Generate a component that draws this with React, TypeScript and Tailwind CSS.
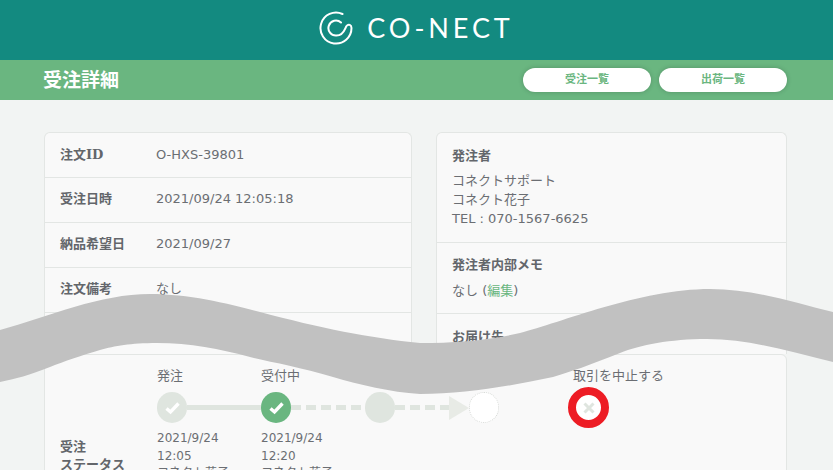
const font = { fontFamily: '"DejaVu Sans","Noto Sans CJK JP",sans-serif' };

function Row({ label, value, first }: { label: React.ReactNode; value: string; first?: boolean }) {
  return (
    <div className={`flex items-center h-[45px] px-[15px] border-b border-[#e3e6e4] ${first ? "" : "pb-[2px]"}`}>
      <div className="w-[96px] font-bold text-[#63666b]">{label}</div>
      <div className="text-[#6b6e73]">{value}</div>
    </div>
  );
}

function Check({ color }: { color: string }) {
  return (
    <div className="w-[30px] h-[31px] rounded-full flex items-center justify-center shrink-0" style={{ background: color }}>
      <svg width="17" height="14" viewBox="0 0 17 14"><path d="M2.5 7.5 6.5 11 14.5 2.5" fill="none" stroke="#fff" strokeWidth="3.4" /></svg>
    </div>
  );
}

const dash = "h-[5px] flex-1 bg-[repeating-linear-gradient(90deg,#dfe5df_0,#dfe5df_10px,transparent_10px,transparent_15px)]";

function Step({ label, date, time, who, children }: { label?: string; date?: string; time?: string; who?: string; children: React.ReactNode }) {
  return (
    <div className="w-[104px] flex flex-col shrink-0">
      <div className="h-[20px] leading-[20px] text-[#6b6e73] mb-[6px] whitespace-nowrap">{label || "\u00a0"}</div>
      <div className="flex items-center h-[31px]">{children}</div>
      <div className="mt-[7px] text-[12px] leading-[17.5px] text-[#6b6e73] whitespace-nowrap">
        <div>{date}</div>
        <div>{time}</div>
        <div>{who}</div>
      </div>
    </div>
  );
}

export default function App() {
  return (
    <div className="relative h-screen overflow-hidden bg-[#f2f4f3] text-[13px]" style={font}>
      <header className="h-[60px] bg-[#138a80] flex items-center justify-center gap-[14px] pb-[5px] pr-[3px] text-white">
        <svg width="34" height="34" viewBox="0 0 34 34" fill="none" stroke="#fff" strokeWidth="2" strokeLinecap="round">
          <path d="M23.5 3A15.5 15.5 0 1 0 32.5 17C32.5 14 29.5 12.5 27.5 15C26 17 25 24.5 17.5 24.5A7.5 7.5 0 1 1 22 11.5" />
        </svg>
        <div className="text-[27px] leading-none font-normal tracking-[3.9px] mr-[-3px]" style={{ fontFamily: "Lato, sans-serif" }}>CO-NECT</div>
      </header>
      <div className="h-[40px] bg-[#6ab680] flex items-center pl-[43px] pr-[46px] justify-between">
        <h1 className="text-[19px] font-bold text-white">受注詳細</h1>
        <div className="flex gap-2">
          <button className="w-[128px] h-[24px] rounded-full bg-white text-[11px] font-bold text-[#6ab680] shadow-[0_0_5px_rgba(0,0,0,0.2)]">受注一覧</button>
          <button className="w-[128px] h-[24px] rounded-full bg-white text-[11px] font-bold text-[#6ab680] shadow-[0_0_5px_rgba(0,0,0,0.2)]">出荷一覧</button>
        </div>
      </div>
      <main className="pt-[32px] pl-[44px] pr-[46px]">
        <div className="flex gap-[24px] h-[222px]">
          <div className="w-[368px] bg-[#f9f9f9] border border-b-0 border-[#e3e6e4] rounded-t-md">
            <Row first label={<>注文<span style={{ fontFamily: '"DejaVu Serif",serif' }}>ID</span></>} value="O-HXS-39801" />
            <Row label="受注日時" value="2021/09/24 12:05:18" />
            <Row label="納品希望日" value="2021/09/27" />
            <Row label="注文備考" value="なし" />
          </div>
          <div className="flex-1 bg-[#f9f9f9] border border-b-0 border-[#e3e6e4] rounded-t-md overflow-hidden text-[#6b6e73]">
            <div className="h-[110px] px-[15px] pt-[13px] border-b border-[#e3e6e4] leading-[19px]">
              <div className="font-bold text-[#63666b] mb-[6px]">発注者</div>
              <div>コネクトサポート</div>
              <div>コネクト花子</div>
              <div>TEL : 070-1567-6625</div>
            </div>
            <div className="h-[71px] px-[15px] pt-[12px] border-b border-[#e3e6e4] leading-[19px]">
              <div className="font-bold text-[#63666b] mb-[7px]">発注者内部メモ</div>
              <div>なし (<span className="text-[#6ab680]">編集</span>)</div>
            </div>
            <div className="px-[15px] pt-[13px] leading-[19px] font-bold text-[#63666b]">お届け先</div>
          </div>
        </div>
        <div className="flex bg-[#f9f9f9] border border-[#e3e6e4] rounded-t-md h-[140px] pl-[15px] pt-[11px]">
          <div className="w-[97px] pt-[72px] font-bold text-[#63666b] leading-[18px]">
            <div>受注</div>
            <div>ステータス</div>
          </div>
          <Step label="発注" date="2021/9/24" time="12:05" who="コネクト花子">
            <Check color="#dfe5df" />
            <div className="h-[5px] flex-1 bg-[#dfe5df]" />
          </Step>
          <Step label="受付中" date="2021/9/24" time="12:20" who="コネクト花子">
            <Check color="#6ab680" />
            <div className={dash} />
          </Step>
          <Step>
            <div className="w-[30px] h-[31px] rounded-full bg-[#dfe5df] shrink-0" />
            <div className={dash} />
            <svg width="20" height="24" viewBox="0 0 20 24" className="shrink-0"><path d="M0 0 20 12 0 24Z" fill="#e8ebe6" /></svg>
          </Step>
          <Step>
            <div className="w-[30px] h-[31px] rounded-full bg-white border border-dotted border-[#d5d8d5]" />
          </Step>
          <Step label="取引を中止する">
            <div className="w-[41px] h-[41px] rounded-full bg-white border-[8px] border-[#ed1c24] ml-[-5px] flex items-center justify-center shrink-0">
              <svg width="12" height="12" viewBox="0 0 12 12"><path d="M1.5 1.5 10.5 10.5M10.5 1.5 1.5 10.5" stroke="#dfe5df" strokeWidth="3" /></svg>
            </div>
          </Step>
        </div>
      </main>
      <svg className="absolute left-0 top-0 pointer-events-none" width="833" height="470" viewBox="0 0 833 470">
        <path
          fill="#c1c1c1"
          d="M0 330C50 316 100 294 150 294C190 294 230 304 260 312C320 328 370 338 420 343C455 343 490 340 520 333C560 323 640 289 710 289C755 289 795 303 833 312L833 362C790 352 750 339 707 339C670 339 640 345 620 353C590 365 570 372 553 377C510 386 465 394 420 394C390 392 360 385 333 377C300 367 270 362 250 357C220 349 190 343 157 343C130 343 115 346 100 350C80 356 65 361 50 367C30 375 15 379 0 382Z"
        />
      </svg>
    </div>
  );
}
